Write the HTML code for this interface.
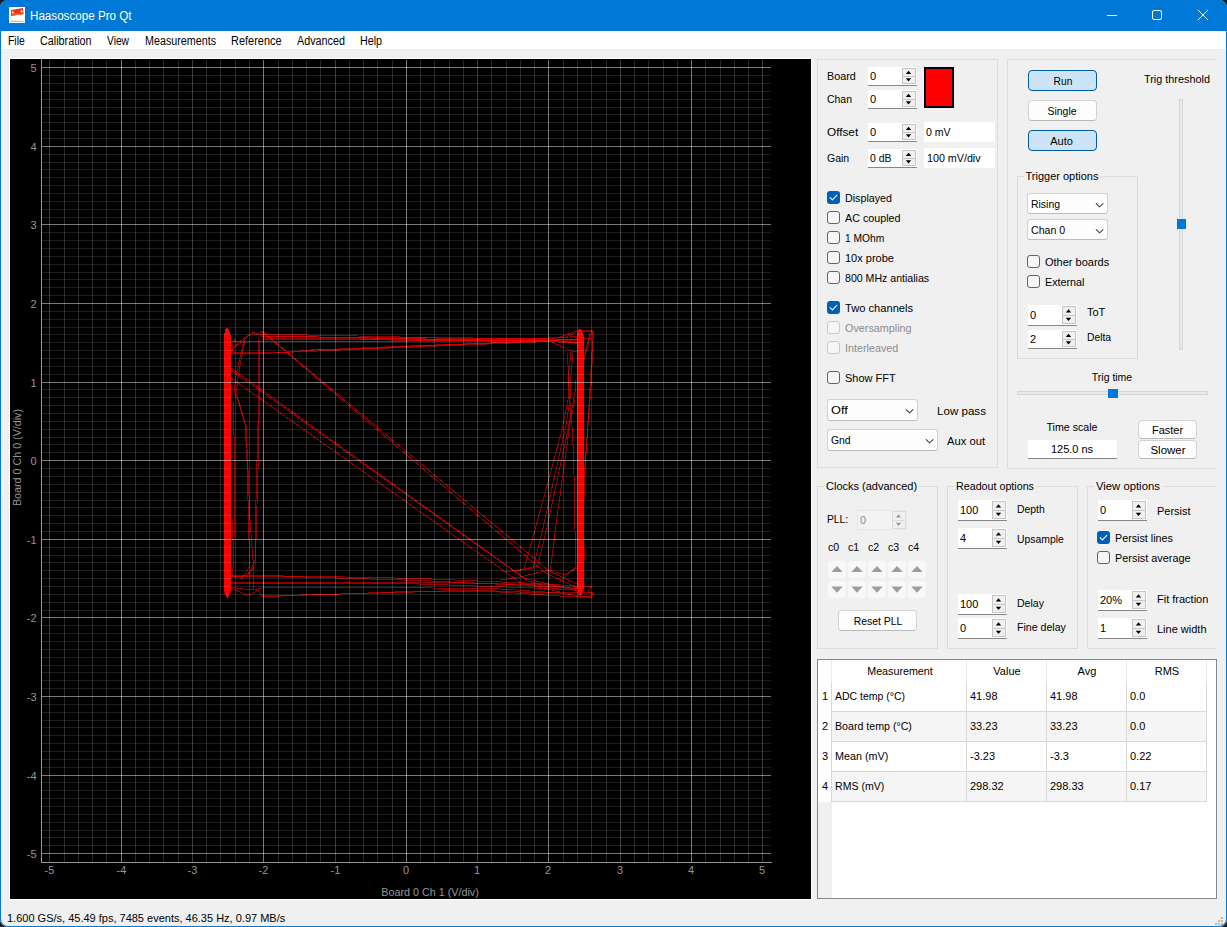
<!DOCTYPE html>
<html><head><meta charset="utf-8"><title>Haasoscope Pro Qt</title>
<style>
html,body{margin:0;padding:0;}
body{width:1227px;height:927px;overflow:hidden;background:#1b1b1b;font-family:"Liberation Sans", sans-serif;}
#win{position:absolute;left:0;top:0;width:1227px;height:927px;background:#f0f0f0;
 box-shadow:inset 0 0 0 1px #0078d7;border-radius:8px;overflow:hidden;}
#win div,#win svg{position:absolute;}
.t{font-family:"Liberation Sans", sans-serif;}
</style></head><body>
<div id="win">
<div style="left:0px;top:0px;width:1227px;height:31px;background:#0078d7;"></div>
<svg style="left:9px;top:7px" width="16" height="16"><rect width="16" height="16" fill="#fff"/><path d="M1.8 3.1 L14.1 0.9 L14.6 7.2 L2.2 9.1 Z" fill="#ee3a0b"/><ellipse cx="3.8" cy="5.5" rx="1" ry="1.3" fill="#e8f4f4"/><ellipse cx="12.6" cy="4.5" rx="1" ry="1.3" fill="#e8f4f4"/><path d="M5.5 7.3 H10.5" stroke="#f59a80" stroke-width="0.8"/><rect x="0.5" y="13.6" width="15" height="1.4" fill="#d9d3cf"/><rect x="1.5" y="14" width="11" height="0.8" fill="#b5b5b5"/></svg>
<div class="t" style="top:9px;font-size:12px;line-height:14px;color:#fff;white-space:nowrap;transform:scaleX(0.9693);transform-origin:left center;left:30px;">Haasoscope Pro Qt</div>
<svg style="left:1100px;top:5px" width="120" height="22"><path d="M7 10.5 H17" stroke="#fff" stroke-width="1" fill="none"/><rect x="52.5" y="5.5" width="9" height="9" rx="1.5" fill="none" stroke="#fff" stroke-width="1"/><path d="M98 5 L108 15 M108 5 L98 15" stroke="#fff" stroke-width="1" fill="none"/></svg>
<div style="left:1px;top:31px;width:1225px;height:18px;background:#fff;"></div>
<div class="t" style="top:34px;font-size:12px;line-height:14px;color:#000;white-space:nowrap;transform:scaleX(0.8685);transform-origin:left center;left:8px;">File</div>
<div class="t" style="top:34px;font-size:12px;line-height:14px;color:#000;white-space:nowrap;transform:scaleX(0.8993);transform-origin:left center;left:40px;">Calibration</div>
<div class="t" style="top:34px;font-size:12px;line-height:14px;color:#000;white-space:nowrap;transform:scaleX(0.8528);transform-origin:left center;left:107px;">View</div>
<div class="t" style="top:34px;font-size:12px;line-height:14px;color:#000;white-space:nowrap;transform:scaleX(0.8945);transform-origin:left center;left:144.5px;">Measurements</div>
<div class="t" style="top:34px;font-size:12px;line-height:14px;color:#000;white-space:nowrap;transform:scaleX(0.9138);transform-origin:left center;left:230.5px;">Reference</div>
<div class="t" style="top:34px;font-size:12px;line-height:14px;color:#000;white-space:nowrap;transform:scaleX(0.8993);transform-origin:left center;left:297px;">Advanced</div>
<div class="t" style="top:34px;font-size:12px;line-height:14px;color:#000;white-space:nowrap;transform:scaleX(0.8911);transform-origin:left center;left:360px;">Help</div>
<div style="left:9px;top:58px;width:803px;height:842px;background:#000;border:1px solid #fff;box-sizing:border-box;"></div>
<svg style="left:0;top:0" width="830" height="905" shape-rendering="crispEdges">
<path d="M224 336 L225 330 L227 327 L229 330 L231 336 L231 590 L228 597 L227 598 L224 590 Z" fill="#ff0000"/>
<path d="M577 336 L578 331 L580 328 L582 331 L584 338 L584 588 L581 595 L580 596 L577 588 Z" fill="#ff0000"/>
<polyline points="227.2,334.8 227.8,455.9 227.2,589.8" fill="none" stroke="#ff0000" stroke-opacity="0.5" stroke-width="1"/>
<polyline points="578.6,335.2 578.8,495.2 578.0,591.8" fill="none" stroke="#ff0000" stroke-opacity="0.5" stroke-width="1"/>
<polyline points="225.0,338.3 225.3,405.0 225.7,584.5" fill="none" stroke="#ff0000" stroke-opacity="0.5" stroke-width="1"/>
<polyline points="581.4,336.6 580.9,401.8 581.5,595.2" fill="none" stroke="#ff0000" stroke-opacity="0.5" stroke-width="1"/>
<polyline points="225.6,330.4 225.0,455.7 225.6,586.2" fill="none" stroke="#ff0000" stroke-opacity="0.5" stroke-width="1"/>
<polyline points="580.6,337.0 580.6,479.5 580.6,592.1" fill="none" stroke="#ff0000" stroke-opacity="0.5" stroke-width="1"/>
<polyline points="230.5,340.9 231.0,484.9 230.2,594.8" fill="none" stroke="#ff0000" stroke-opacity="0.5" stroke-width="1"/>
<polyline points="579.2,329.0 579.6,448.0 579.7,590.6" fill="none" stroke="#ff0000" stroke-opacity="0.5" stroke-width="1"/>
<polyline points="230.2,338.9 229.5,425.2 230.8,591.4" fill="none" stroke="#ff0000" stroke-opacity="0.5" stroke-width="1"/>
<polyline points="583.4,333.6 582.8,475.5 583.8,592.2" fill="none" stroke="#ff0000" stroke-opacity="0.5" stroke-width="1"/>
<polyline points="225.0,331.7 225.7,491.0 224.5,594.6" fill="none" stroke="#ff0000" stroke-opacity="0.5" stroke-width="1"/>
<polyline points="578.1,328.8 578.5,421.3 578.2,589.7" fill="none" stroke="#ff0000" stroke-opacity="0.5" stroke-width="1"/>
<polyline points="225.6,337.2 225.1,477.2 225.1,592.1" fill="none" stroke="#ff0000" stroke-opacity="0.5" stroke-width="1"/>
<polyline points="578.8,331.8 579.4,496.4 578.5,583.6" fill="none" stroke="#ff0000" stroke-opacity="0.5" stroke-width="1"/>
<polyline points="225.8,332.5 226.3,477.0 225.2,584.1" fill="none" stroke="#ff0000" stroke-opacity="0.5" stroke-width="1"/>
<polyline points="578.8,331.6 579.2,439.5 578.5,595.0" fill="none" stroke="#ff0000" stroke-opacity="0.5" stroke-width="1"/>
<polyline points="225.0,335.2 224.7,472.2 224.9,591.7" fill="none" stroke="#ff0000" stroke-opacity="0.5" stroke-width="1"/>
<polyline points="583.3,334.8 583.4,504.0 582.8,593.8" fill="none" stroke="#ff0000" stroke-opacity="0.5" stroke-width="1"/>
<polyline points="230.0,338.4 229.6,422.8 230.3,584.8" fill="none" stroke="#ff0000" stroke-opacity="0.5" stroke-width="1"/>
<polyline points="578.7,341.3 579.2,472.4 578.6,594.5" fill="none" stroke="#ff0000" stroke-opacity="0.5" stroke-width="1"/>
<polyline points="261.0,336.5 548.0,339.0 577.0,336.2" fill="none" stroke="#ff0000" stroke-opacity="0.56" stroke-width="1"/>
<polyline points="263.0,338.0 548.0,339.8 577.0,342.6" fill="none" stroke="#ff0000" stroke-opacity="0.56" stroke-width="1"/>
<polyline points="262.0,339.5 548.0,340.6 577.0,339.0" fill="none" stroke="#ff0000" stroke-opacity="0.56" stroke-width="1"/>
<polyline points="262.0,336.0 548.0,341.2 577.0,342.4" fill="none" stroke="#ff0000" stroke-opacity="0.56" stroke-width="1"/>
<polyline points="360.0,339.5 548.0,340.4 577.0,338.9" fill="none" stroke="#ff0000" stroke-opacity="0.56" stroke-width="1"/>
<polyline points="231.0,341.5 548.0,341.3 577.0,343.2" fill="none" stroke="#ff0000" stroke-opacity="0.56" stroke-width="1"/>
<polyline points="231.0,342.0 548.0,340.2 577.0,340.8" fill="none" stroke="#ff0000" stroke-opacity="0.56" stroke-width="1"/>
<polyline points="258.0,334.5 277.0,334.5 337.0,335.5 400.0,337.0 548.0,339.0" fill="none" stroke="#ff0000" stroke-opacity="0.56" stroke-width="1"/>
<polyline points="231.0,352.7 282.0,352.5 330.0,350.5 420.0,346.0 548.0,340.5" fill="none" stroke="#ff0000" stroke-opacity="0.56" stroke-width="1"/>
<polyline points="231.0,353.2 275.0,353.0 310.0,350.2 430.0,345.2 548.0,341.0" fill="none" stroke="#ff0000" stroke-opacity="0.56" stroke-width="1"/>
<polyline points="310.0,350.0 380.0,348.4 548.0,341.5" fill="none" stroke="#ff0000" stroke-opacity="0.56" stroke-width="1"/>
<polyline points="548.0,340.0 573.0,352.0 577.0,351.0" fill="none" stroke="#ff0000" stroke-opacity="0.56" stroke-width="1"/>
<polyline points="548.0,338.0 566.0,337.0 575.0,333.0 580.0,329.0" fill="none" stroke="#ff0000" stroke-opacity="0.56" stroke-width="1"/>
<polyline points="548.0,339.0 570.0,340.0 592.0,338.0" fill="none" stroke="#ff0000" stroke-opacity="0.56" stroke-width="1"/>
<polyline points="560.0,337.0 577.0,331.0 592.0,330.0 593.0,345.0 590.8,390.0 584.0,478.0" fill="none" stroke="#ff0000" stroke-opacity="0.56" stroke-width="1"/>
<polyline points="577.0,333.0 590.0,331.0 594.0,331.0 592.0,352.0 589.0,405.0 585.0,470.0 584.5,500.0" fill="none" stroke="#ff0000" stroke-opacity="0.56" stroke-width="1"/>
<polyline points="584.6,548.0 584.8,560.0" fill="none" stroke="#ff0000" stroke-opacity="0.56" stroke-width="1"/>
<polyline points="592.0,330.0 584.0,360.0 583.0,372.0" fill="none" stroke="#ff0000" stroke-opacity="0.56" stroke-width="1"/>
<polyline points="590.0,333.0 583.0,362.0" fill="none" stroke="#ff0000" stroke-opacity="0.56" stroke-width="1"/>
<polyline points="230.0,353.0 236.0,346.0 242.0,342.0 248.0,336.0 253.0,333.0 256.0,335.0 262.0,331.0" fill="none" stroke="#ff0000" stroke-opacity="0.56" stroke-width="1"/>
<polyline points="231.0,350.0 238.0,343.0 246.0,337.0 254.0,332.0 258.0,334.0" fill="none" stroke="#ff0000" stroke-opacity="0.56" stroke-width="1"/>
<polyline points="232.0,342.0 236.0,339.0 231.0,346.0" fill="none" stroke="#ff0000" stroke-opacity="0.56" stroke-width="1"/>
<polyline points="231.0,345.0 234.0,348.0 231.0,352.0" fill="none" stroke="#ff0000" stroke-opacity="0.56" stroke-width="1"/>
<polyline points="244.0,340.0 240.0,358.0 236.0,376.0 234.0,392.0 238.0,400.0 245.0,424.0 247.0,460.0 248.0,500.0 249.0,540.0 250.0,566.0 243.0,577.0 232.0,576.0" fill="none" stroke="#ff0000" stroke-opacity="0.56" stroke-width="1"/>
<polyline points="245.0,340.0 241.0,360.0 238.0,378.0 236.0,394.0 239.0,402.0 246.0,426.0 248.0,470.0 250.0,520.0 253.0,560.0 253.0,590.0" fill="none" stroke="#ff0000" stroke-opacity="0.56" stroke-width="1"/>
<polyline points="258.0,338.0 258.0,425.0 257.0,460.0 256.0,500.0 255.0,560.0 250.0,572.0 240.0,579.0" fill="none" stroke="#ff0000" stroke-opacity="0.56" stroke-width="1"/>
<polyline points="259.0,340.0 259.0,420.0 258.0,470.0 256.0,540.0 255.0,566.0 246.0,578.0" fill="none" stroke="#ff0000" stroke-opacity="0.56" stroke-width="1"/>
<polyline points="232.0,520.0 234.0,560.0 232.0,576.0" fill="none" stroke="#ff0000" stroke-opacity="0.56" stroke-width="1"/>
<polyline points="233.0,400.0 235.0,470.0 234.0,540.0" fill="none" stroke="#ff0000" stroke-opacity="0.56" stroke-width="1"/>
<polyline points="262.0,331.0 500.0,529.8 549.0,571.0 577.0,584.0" fill="none" stroke="#ff0000" stroke-opacity="0.56" stroke-width="1"/>
<polyline points="262.0,331.5 500.0,534.2 545.0,572.5 577.0,588.0" fill="none" stroke="#ff0000" stroke-opacity="0.56" stroke-width="1"/>
<polyline points="231.0,367.8 524.0,578.0 577.0,591.0" fill="none" stroke="#ff0000" stroke-opacity="0.56" stroke-width="1"/>
<polyline points="231.0,370.0 528.0,581.0 560.0,590.0" fill="none" stroke="#ff0000" stroke-opacity="0.56" stroke-width="1"/>
<polyline points="231.0,378.0 521.0,583.0 560.0,592.0" fill="none" stroke="#ff0000" stroke-opacity="0.56" stroke-width="1"/>
<polyline points="506.0,572.0 524.0,569.0 535.0,530.0 562.0,430.0 568.0,400.0 569.0,370.0 571.0,352.0" fill="none" stroke="#ff0000" stroke-opacity="0.56" stroke-width="1"/>
<polyline points="515.0,571.0 533.0,568.0 542.5,530.0 566.0,425.0 570.0,400.0 571.0,375.0 573.0,353.0" fill="none" stroke="#ff0000" stroke-opacity="0.56" stroke-width="1"/>
<polyline points="520.0,570.0 537.6,566.0 546.3,530.0 568.0,430.0 575.0,392.0 576.0,380.0" fill="none" stroke="#ff0000" stroke-opacity="0.56" stroke-width="1"/>
<polyline points="549.4,578.7 555.3,530.0 570.4,420.0 575.0,400.0" fill="none" stroke="#ff0000" stroke-opacity="0.56" stroke-width="1"/>
<polyline points="567.5,353.0 569.0,390.0 572.7,435.0 574.0,475.0 575.0,530.0 576.0,566.0" fill="none" stroke="#ff0000" stroke-opacity="0.56" stroke-width="1"/>
<polyline points="231.0,575.7 300.0,576.1 420.0,578.5 548.0,584.0 577.0,586.2" fill="none" stroke="#ff0000" stroke-opacity="0.56" stroke-width="1"/>
<polyline points="231.0,576.5 300.0,576.9 420.0,580.5 548.0,586.5 577.0,588.2" fill="none" stroke="#ff0000" stroke-opacity="0.56" stroke-width="1"/>
<polyline points="231.0,582.6 300.0,583.0 420.0,582.0 548.0,585.0 577.0,588.9" fill="none" stroke="#ff0000" stroke-opacity="0.56" stroke-width="1"/>
<polyline points="231.0,583.0 300.0,583.4 420.0,584.0 548.0,588.5 577.0,589.8" fill="none" stroke="#ff0000" stroke-opacity="0.56" stroke-width="1"/>
<polyline points="231.0,587.5 255.0,590.0 262.0,588.0 400.0,587.5 500.0,589.0 560.0,593.0 592.0,598.0" fill="none" stroke="#ff0000" stroke-opacity="0.56" stroke-width="1"/>
<polyline points="231.0,588.0 244.0,594.0 252.0,594.0 258.0,590.0 262.0,596.0 330.0,594.5 420.0,591.0 500.0,592.0 560.0,596.0 594.0,596.0" fill="none" stroke="#ff0000" stroke-opacity="0.56" stroke-width="1"/>
<polyline points="262.0,597.0 300.0,595.0 400.0,592.5 470.0,590.0 520.0,592.0 594.0,592.0" fill="none" stroke="#ff0000" stroke-opacity="0.56" stroke-width="1"/>
<polyline points="500.0,580.0 520.0,577.0 549.0,570.0 565.0,575.0 577.0,568.0" fill="none" stroke="#ff0000" stroke-opacity="0.56" stroke-width="1"/>
<polyline points="560.0,582.0 570.0,572.0 577.0,566.0" fill="none" stroke="#ff0000" stroke-opacity="0.56" stroke-width="1"/>
<polyline points="584.0,587.0 592.0,586.0 588.0,592.0 594.0,594.0 586.0,597.0" fill="none" stroke="#ff0000" stroke-opacity="0.56" stroke-width="1"/>
<rect x="42" y="845" width="729" height="1" fill="#fff" fill-opacity="0.118"/>
<rect x="42" y="837" width="729" height="1" fill="#fff" fill-opacity="0.118"/>
<rect x="42" y="830" width="729" height="1" fill="#fff" fill-opacity="0.118"/>
<rect x="42" y="822" width="729" height="1" fill="#fff" fill-opacity="0.118"/>
<rect x="42" y="814" width="729" height="1" fill="#fff" fill-opacity="0.118"/>
<rect x="42" y="806" width="729" height="1" fill="#fff" fill-opacity="0.118"/>
<rect x="42" y="798" width="729" height="1" fill="#fff" fill-opacity="0.118"/>
<rect x="42" y="790" width="729" height="1" fill="#fff" fill-opacity="0.118"/>
<rect x="42" y="782" width="729" height="1" fill="#fff" fill-opacity="0.118"/>
<rect x="42" y="767" width="729" height="1" fill="#fff" fill-opacity="0.118"/>
<rect x="42" y="759" width="729" height="1" fill="#fff" fill-opacity="0.118"/>
<rect x="42" y="751" width="729" height="1" fill="#fff" fill-opacity="0.118"/>
<rect x="42" y="743" width="729" height="1" fill="#fff" fill-opacity="0.118"/>
<rect x="42" y="735" width="729" height="1" fill="#fff" fill-opacity="0.118"/>
<rect x="42" y="727" width="729" height="1" fill="#fff" fill-opacity="0.118"/>
<rect x="42" y="720" width="729" height="1" fill="#fff" fill-opacity="0.118"/>
<rect x="42" y="712" width="729" height="1" fill="#fff" fill-opacity="0.118"/>
<rect x="42" y="704" width="729" height="1" fill="#fff" fill-opacity="0.118"/>
<rect x="42" y="688" width="729" height="1" fill="#fff" fill-opacity="0.118"/>
<rect x="42" y="680" width="729" height="1" fill="#fff" fill-opacity="0.118"/>
<rect x="42" y="672" width="729" height="1" fill="#fff" fill-opacity="0.118"/>
<rect x="42" y="665" width="729" height="1" fill="#fff" fill-opacity="0.118"/>
<rect x="42" y="657" width="729" height="1" fill="#fff" fill-opacity="0.118"/>
<rect x="42" y="649" width="729" height="1" fill="#fff" fill-opacity="0.118"/>
<rect x="42" y="641" width="729" height="1" fill="#fff" fill-opacity="0.118"/>
<rect x="42" y="633" width="729" height="1" fill="#fff" fill-opacity="0.118"/>
<rect x="42" y="625" width="729" height="1" fill="#fff" fill-opacity="0.118"/>
<rect x="42" y="610" width="729" height="1" fill="#fff" fill-opacity="0.118"/>
<rect x="42" y="602" width="729" height="1" fill="#fff" fill-opacity="0.118"/>
<rect x="42" y="594" width="729" height="1" fill="#fff" fill-opacity="0.118"/>
<rect x="42" y="586" width="729" height="1" fill="#fff" fill-opacity="0.118"/>
<rect x="42" y="578" width="729" height="1" fill="#fff" fill-opacity="0.118"/>
<rect x="42" y="570" width="729" height="1" fill="#fff" fill-opacity="0.118"/>
<rect x="42" y="562" width="729" height="1" fill="#fff" fill-opacity="0.118"/>
<rect x="42" y="555" width="729" height="1" fill="#fff" fill-opacity="0.118"/>
<rect x="42" y="547" width="729" height="1" fill="#fff" fill-opacity="0.118"/>
<rect x="42" y="531" width="729" height="1" fill="#fff" fill-opacity="0.118"/>
<rect x="42" y="523" width="729" height="1" fill="#fff" fill-opacity="0.118"/>
<rect x="42" y="515" width="729" height="1" fill="#fff" fill-opacity="0.118"/>
<rect x="42" y="507" width="729" height="1" fill="#fff" fill-opacity="0.118"/>
<rect x="42" y="500" width="729" height="1" fill="#fff" fill-opacity="0.118"/>
<rect x="42" y="492" width="729" height="1" fill="#fff" fill-opacity="0.118"/>
<rect x="42" y="484" width="729" height="1" fill="#fff" fill-opacity="0.118"/>
<rect x="42" y="476" width="729" height="1" fill="#fff" fill-opacity="0.118"/>
<rect x="42" y="468" width="729" height="1" fill="#fff" fill-opacity="0.118"/>
<rect x="42" y="452" width="729" height="1" fill="#fff" fill-opacity="0.118"/>
<rect x="42" y="444" width="729" height="1" fill="#fff" fill-opacity="0.118"/>
<rect x="42" y="437" width="729" height="1" fill="#fff" fill-opacity="0.118"/>
<rect x="42" y="429" width="729" height="1" fill="#fff" fill-opacity="0.118"/>
<rect x="42" y="421" width="729" height="1" fill="#fff" fill-opacity="0.118"/>
<rect x="42" y="413" width="729" height="1" fill="#fff" fill-opacity="0.118"/>
<rect x="42" y="405" width="729" height="1" fill="#fff" fill-opacity="0.118"/>
<rect x="42" y="397" width="729" height="1" fill="#fff" fill-opacity="0.118"/>
<rect x="42" y="389" width="729" height="1" fill="#fff" fill-opacity="0.118"/>
<rect x="42" y="374" width="729" height="1" fill="#fff" fill-opacity="0.118"/>
<rect x="42" y="366" width="729" height="1" fill="#fff" fill-opacity="0.118"/>
<rect x="42" y="358" width="729" height="1" fill="#fff" fill-opacity="0.118"/>
<rect x="42" y="350" width="729" height="1" fill="#fff" fill-opacity="0.118"/>
<rect x="42" y="342" width="729" height="1" fill="#fff" fill-opacity="0.118"/>
<rect x="42" y="334" width="729" height="1" fill="#fff" fill-opacity="0.118"/>
<rect x="42" y="327" width="729" height="1" fill="#fff" fill-opacity="0.118"/>
<rect x="42" y="319" width="729" height="1" fill="#fff" fill-opacity="0.118"/>
<rect x="42" y="311" width="729" height="1" fill="#fff" fill-opacity="0.118"/>
<rect x="42" y="295" width="729" height="1" fill="#fff" fill-opacity="0.118"/>
<rect x="42" y="287" width="729" height="1" fill="#fff" fill-opacity="0.118"/>
<rect x="42" y="279" width="729" height="1" fill="#fff" fill-opacity="0.118"/>
<rect x="42" y="272" width="729" height="1" fill="#fff" fill-opacity="0.118"/>
<rect x="42" y="264" width="729" height="1" fill="#fff" fill-opacity="0.118"/>
<rect x="42" y="256" width="729" height="1" fill="#fff" fill-opacity="0.118"/>
<rect x="42" y="248" width="729" height="1" fill="#fff" fill-opacity="0.118"/>
<rect x="42" y="240" width="729" height="1" fill="#fff" fill-opacity="0.118"/>
<rect x="42" y="232" width="729" height="1" fill="#fff" fill-opacity="0.118"/>
<rect x="42" y="217" width="729" height="1" fill="#fff" fill-opacity="0.118"/>
<rect x="42" y="209" width="729" height="1" fill="#fff" fill-opacity="0.118"/>
<rect x="42" y="201" width="729" height="1" fill="#fff" fill-opacity="0.118"/>
<rect x="42" y="193" width="729" height="1" fill="#fff" fill-opacity="0.118"/>
<rect x="42" y="185" width="729" height="1" fill="#fff" fill-opacity="0.118"/>
<rect x="42" y="177" width="729" height="1" fill="#fff" fill-opacity="0.118"/>
<rect x="42" y="169" width="729" height="1" fill="#fff" fill-opacity="0.118"/>
<rect x="42" y="162" width="729" height="1" fill="#fff" fill-opacity="0.118"/>
<rect x="42" y="154" width="729" height="1" fill="#fff" fill-opacity="0.118"/>
<rect x="42" y="138" width="729" height="1" fill="#fff" fill-opacity="0.118"/>
<rect x="42" y="130" width="729" height="1" fill="#fff" fill-opacity="0.118"/>
<rect x="42" y="122" width="729" height="1" fill="#fff" fill-opacity="0.118"/>
<rect x="42" y="114" width="729" height="1" fill="#fff" fill-opacity="0.118"/>
<rect x="42" y="107" width="729" height="1" fill="#fff" fill-opacity="0.118"/>
<rect x="42" y="99" width="729" height="1" fill="#fff" fill-opacity="0.118"/>
<rect x="42" y="91" width="729" height="1" fill="#fff" fill-opacity="0.118"/>
<rect x="42" y="83" width="729" height="1" fill="#fff" fill-opacity="0.118"/>
<rect x="42" y="75" width="729" height="1" fill="#fff" fill-opacity="0.118"/>
<rect x="64" y="60" width="1" height="802" fill="#fff" fill-opacity="0.16"/>
<rect x="78" y="60" width="1" height="802" fill="#fff" fill-opacity="0.16"/>
<rect x="92" y="60" width="1" height="802" fill="#fff" fill-opacity="0.16"/>
<rect x="106" y="60" width="1" height="802" fill="#fff" fill-opacity="0.16"/>
<rect x="135" y="60" width="1" height="802" fill="#fff" fill-opacity="0.16"/>
<rect x="149" y="60" width="1" height="802" fill="#fff" fill-opacity="0.16"/>
<rect x="163" y="60" width="1" height="802" fill="#fff" fill-opacity="0.16"/>
<rect x="178" y="60" width="1" height="802" fill="#fff" fill-opacity="0.16"/>
<rect x="206" y="60" width="1" height="802" fill="#fff" fill-opacity="0.16"/>
<rect x="220" y="60" width="1" height="802" fill="#fff" fill-opacity="0.16"/>
<rect x="235" y="60" width="1" height="802" fill="#fff" fill-opacity="0.16"/>
<rect x="249" y="60" width="1" height="802" fill="#fff" fill-opacity="0.16"/>
<rect x="278" y="60" width="1" height="802" fill="#fff" fill-opacity="0.16"/>
<rect x="292" y="60" width="1" height="802" fill="#fff" fill-opacity="0.16"/>
<rect x="306" y="60" width="1" height="802" fill="#fff" fill-opacity="0.16"/>
<rect x="320" y="60" width="1" height="802" fill="#fff" fill-opacity="0.16"/>
<rect x="349" y="60" width="1" height="802" fill="#fff" fill-opacity="0.16"/>
<rect x="363" y="60" width="1" height="802" fill="#fff" fill-opacity="0.16"/>
<rect x="377" y="60" width="1" height="802" fill="#fff" fill-opacity="0.16"/>
<rect x="392" y="60" width="1" height="802" fill="#fff" fill-opacity="0.16"/>
<rect x="420" y="60" width="1" height="802" fill="#fff" fill-opacity="0.16"/>
<rect x="434" y="60" width="1" height="802" fill="#fff" fill-opacity="0.16"/>
<rect x="449" y="60" width="1" height="802" fill="#fff" fill-opacity="0.16"/>
<rect x="463" y="60" width="1" height="802" fill="#fff" fill-opacity="0.16"/>
<rect x="491" y="60" width="1" height="802" fill="#fff" fill-opacity="0.16"/>
<rect x="506" y="60" width="1" height="802" fill="#fff" fill-opacity="0.16"/>
<rect x="520" y="60" width="1" height="802" fill="#fff" fill-opacity="0.16"/>
<rect x="534" y="60" width="1" height="802" fill="#fff" fill-opacity="0.16"/>
<rect x="563" y="60" width="1" height="802" fill="#fff" fill-opacity="0.16"/>
<rect x="577" y="60" width="1" height="802" fill="#fff" fill-opacity="0.16"/>
<rect x="591" y="60" width="1" height="802" fill="#fff" fill-opacity="0.16"/>
<rect x="606" y="60" width="1" height="802" fill="#fff" fill-opacity="0.16"/>
<rect x="634" y="60" width="1" height="802" fill="#fff" fill-opacity="0.16"/>
<rect x="648" y="60" width="1" height="802" fill="#fff" fill-opacity="0.16"/>
<rect x="663" y="60" width="1" height="802" fill="#fff" fill-opacity="0.16"/>
<rect x="677" y="60" width="1" height="802" fill="#fff" fill-opacity="0.16"/>
<rect x="705" y="60" width="1" height="802" fill="#fff" fill-opacity="0.16"/>
<rect x="720" y="60" width="1" height="802" fill="#fff" fill-opacity="0.16"/>
<rect x="734" y="60" width="1" height="802" fill="#fff" fill-opacity="0.16"/>
<rect x="748" y="60" width="1" height="802" fill="#fff" fill-opacity="0.16"/>
<rect x="42" y="853" width="729" height="1" fill="#fff" fill-opacity="0.47"/>
<rect x="42" y="775" width="729" height="1" fill="#fff" fill-opacity="0.47"/>
<rect x="42" y="696" width="729" height="1" fill="#fff" fill-opacity="0.47"/>
<rect x="42" y="617" width="729" height="1" fill="#fff" fill-opacity="0.47"/>
<rect x="42" y="539" width="729" height="1" fill="#fff" fill-opacity="0.47"/>
<rect x="42" y="460" width="729" height="1" fill="#fff" fill-opacity="0.47"/>
<rect x="42" y="382" width="729" height="1" fill="#fff" fill-opacity="0.47"/>
<rect x="42" y="303" width="729" height="1" fill="#fff" fill-opacity="0.47"/>
<rect x="42" y="224" width="729" height="1" fill="#fff" fill-opacity="0.47"/>
<rect x="42" y="146" width="729" height="1" fill="#fff" fill-opacity="0.47"/>
<rect x="42" y="67" width="729" height="1" fill="#fff" fill-opacity="0.47"/>
<rect x="49" y="60" width="1" height="802" fill="#fff" fill-opacity="0.235"/>
<rect x="121" y="60" width="1" height="802" fill="#fff" fill-opacity="0.47"/>
<rect x="192" y="60" width="1" height="802" fill="#fff" fill-opacity="0.235"/>
<rect x="263" y="60" width="1" height="802" fill="#fff" fill-opacity="0.47"/>
<rect x="335" y="60" width="1" height="802" fill="#fff" fill-opacity="0.235"/>
<rect x="406" y="60" width="1" height="802" fill="#fff" fill-opacity="0.47"/>
<rect x="477" y="60" width="1" height="802" fill="#fff" fill-opacity="0.235"/>
<rect x="548" y="60" width="1" height="802" fill="#fff" fill-opacity="0.47"/>
<rect x="620" y="60" width="1" height="802" fill="#fff" fill-opacity="0.235"/>
<rect x="691" y="60" width="1" height="802" fill="#fff" fill-opacity="0.47"/>
<rect x="762" y="60" width="1" height="802" fill="#fff" fill-opacity="0.235"/>
<rect x="41" y="59" width="1" height="804" fill="#969696"/>
<rect x="41" y="862" width="731" height="1" fill="#969696"/>
</svg>
<div class="t" style="top:848px;font-size:11px;line-height:13px;color:#969696;white-space:nowrap;left:-263.5px;width:300px;text-align:right;">-5</div>
<div class="t" style="top:864px;font-size:11px;line-height:13px;color:#969696;white-space:nowrap;left:-100.5px;width:300px;text-align:center;">-5</div>
<div class="t" style="top:770px;font-size:11px;line-height:13px;color:#969696;white-space:nowrap;left:-263.5px;width:300px;text-align:right;">-4</div>
<div class="t" style="top:864px;font-size:11px;line-height:13px;color:#969696;white-space:nowrap;left:-28.5px;width:300px;text-align:center;">-4</div>
<div class="t" style="top:691px;font-size:11px;line-height:13px;color:#969696;white-space:nowrap;left:-263.5px;width:300px;text-align:right;">-3</div>
<div class="t" style="top:864px;font-size:11px;line-height:13px;color:#969696;white-space:nowrap;left:42.5px;width:300px;text-align:center;">-3</div>
<div class="t" style="top:612px;font-size:11px;line-height:13px;color:#969696;white-space:nowrap;left:-263.5px;width:300px;text-align:right;">-2</div>
<div class="t" style="top:864px;font-size:11px;line-height:13px;color:#969696;white-space:nowrap;left:113.5px;width:300px;text-align:center;">-2</div>
<div class="t" style="top:534px;font-size:11px;line-height:13px;color:#969696;white-space:nowrap;left:-263.5px;width:300px;text-align:right;">-1</div>
<div class="t" style="top:864px;font-size:11px;line-height:13px;color:#969696;white-space:nowrap;left:185.5px;width:300px;text-align:center;">-1</div>
<div class="t" style="top:455px;font-size:11px;line-height:13px;color:#969696;white-space:nowrap;left:-263.5px;width:300px;text-align:right;">0</div>
<div class="t" style="top:864px;font-size:11px;line-height:13px;color:#969696;white-space:nowrap;left:256px;width:300px;text-align:center;">0</div>
<div class="t" style="top:377px;font-size:11px;line-height:13px;color:#969696;white-space:nowrap;left:-263.5px;width:300px;text-align:right;">1</div>
<div class="t" style="top:864px;font-size:11px;line-height:13px;color:#969696;white-space:nowrap;left:327px;width:300px;text-align:center;">1</div>
<div class="t" style="top:298px;font-size:11px;line-height:13px;color:#969696;white-space:nowrap;left:-263.5px;width:300px;text-align:right;">2</div>
<div class="t" style="top:864px;font-size:11px;line-height:13px;color:#969696;white-space:nowrap;left:398px;width:300px;text-align:center;">2</div>
<div class="t" style="top:219px;font-size:11px;line-height:13px;color:#969696;white-space:nowrap;left:-263.5px;width:300px;text-align:right;">3</div>
<div class="t" style="top:864px;font-size:11px;line-height:13px;color:#969696;white-space:nowrap;left:470px;width:300px;text-align:center;">3</div>
<div class="t" style="top:141px;font-size:11px;line-height:13px;color:#969696;white-space:nowrap;left:-263.5px;width:300px;text-align:right;">4</div>
<div class="t" style="top:864px;font-size:11px;line-height:13px;color:#969696;white-space:nowrap;left:541px;width:300px;text-align:center;">4</div>
<div class="t" style="top:62px;font-size:11px;line-height:13px;color:#969696;white-space:nowrap;left:-263.5px;width:300px;text-align:right;">5</div>
<div class="t" style="top:864px;font-size:11px;line-height:13px;color:#969696;white-space:nowrap;left:612px;width:300px;text-align:center;">5</div>
<div class="t" style="top:886px;font-size:11px;line-height:13px;color:#969696;white-space:nowrap;transform:scaleX(0.979);transform-origin:center center;left:280px;width:300px;text-align:center;">Board 0 Ch 1 (V/div)</div>
<div class="t" style="left:-133px;top:450.5px;width:300px;text-align:center;font-size:11px;line-height:13px;color:#969696;transform:rotate(-90deg) scaleX(0.974);white-space:nowrap;">Board 0 Ch 0 (V/div)</div>
<div class="t" style="top:912px;font-size:11px;line-height:13px;color:#000;white-space:nowrap;left:7px;">1.600 GS/s, 45.49 fps, 7485 events, 46.35 Hz, 0.97 MB/s</div>
<div style="left:1221px;top:917px;width:2px;height:2px;background:#b8b8b8;"></div>
<div style="left:1218px;top:920px;width:2px;height:2px;background:#b8b8b8;"></div>
<div style="left:1221px;top:920px;width:2px;height:2px;background:#b8b8b8;"></div>
<div style="left:1215px;top:923px;width:2px;height:2px;background:#b8b8b8;"></div>
<div style="left:1218px;top:923px;width:2px;height:2px;background:#b8b8b8;"></div>
<div style="left:1221px;top:923px;width:2px;height:2px;background:#b8b8b8;"></div>
<div style="left:817px;top:59px;width:181px;height:409px;border:1px solid #dcdcdc;box-sizing:border-box;"></div>
<div class="t" style="top:70px;font-size:11px;line-height:13px;color:#000;white-space:nowrap;transform:scaleX(0.98);transform-origin:left center;left:827px;">Board</div>
<div class="t" style="top:93px;font-size:11px;line-height:13px;color:#000;white-space:nowrap;transform:scaleX(0.948);transform-origin:left center;left:827px;">Chan</div>
<div style="left:868px;top:67px;width:49px;height:18px;background:#fff;"></div>
<div style="left:868px;top:85px;width:49px;height:1px;background:#868686;"></div>
<div style="left:902px;top:68px;width:14px;height:9px;border:1px solid #c6c6c6;background:#f0f0f0;box-sizing:border-box;"></div>
<div style="left:902px;top:76px;width:14px;height:8px;border:1px solid #c6c6c6;background:#f0f0f0;box-sizing:border-box;"></div>
<svg style="left:902px;top:67px" width="14" height="19"><path d="M3.8 7.1 L6.5 3.8 L9.2 7.1 Z" fill="#000"/><path d="M3.8 11.2 L6.5 14.5 L9.2 11.2 Z" fill="#000"/></svg>
<div class="t" style="top:70px;font-size:11px;line-height:13px;color:#000;white-space:nowrap;left:870px;">0</div>
<div style="left:868px;top:90px;width:49px;height:18px;background:#fff;"></div>
<div style="left:868px;top:108px;width:49px;height:1px;background:#868686;"></div>
<div style="left:902px;top:91px;width:14px;height:9px;border:1px solid #c6c6c6;background:#f0f0f0;box-sizing:border-box;"></div>
<div style="left:902px;top:99px;width:14px;height:8px;border:1px solid #c6c6c6;background:#f0f0f0;box-sizing:border-box;"></div>
<svg style="left:902px;top:90px" width="14" height="19"><path d="M3.8 7.1 L6.5 3.8 L9.2 7.1 Z" fill="#000"/><path d="M3.8 11.2 L6.5 14.5 L9.2 11.2 Z" fill="#000"/></svg>
<div class="t" style="top:93px;font-size:11px;line-height:13px;color:#000;white-space:nowrap;left:870px;">0</div>
<div style="left:924px;top:67px;width:30px;height:41px;background:#ff0000;border:2px solid #000;box-sizing:border-box;"></div>
<div class="t" style="top:126px;font-size:11px;line-height:13px;color:#000;white-space:nowrap;transform:scaleX(1.069);transform-origin:left center;left:827px;">Offset</div>
<div style="left:868px;top:123px;width:49px;height:18px;background:#fff;"></div>
<div style="left:868px;top:141px;width:49px;height:1px;background:#868686;"></div>
<div style="left:902px;top:124px;width:14px;height:9px;border:1px solid #c6c6c6;background:#f0f0f0;box-sizing:border-box;"></div>
<div style="left:902px;top:132px;width:14px;height:8px;border:1px solid #c6c6c6;background:#f0f0f0;box-sizing:border-box;"></div>
<svg style="left:902px;top:123px" width="14" height="19"><path d="M3.8 7.1 L6.5 3.8 L9.2 7.1 Z" fill="#000"/><path d="M3.8 11.2 L6.5 14.5 L9.2 11.2 Z" fill="#000"/></svg>
<div class="t" style="top:126px;font-size:11px;line-height:13px;color:#000;white-space:nowrap;left:870px;">0</div>
<div style="left:924px;top:122px;width:71px;height:20px;background:#fff;"></div>
<div class="t" style="top:126px;font-size:11px;line-height:13px;color:#000;white-space:nowrap;transform:scaleX(0.961);transform-origin:left center;left:926px;">0 mV</div>
<div class="t" style="top:152px;font-size:11px;line-height:13px;color:#000;white-space:nowrap;transform:scaleX(0.956);transform-origin:left center;left:827px;">Gain</div>
<div style="left:868px;top:149px;width:49px;height:18px;background:#fff;"></div>
<div style="left:868px;top:167px;width:49px;height:1px;background:#868686;"></div>
<div style="left:902px;top:150px;width:14px;height:9px;border:1px solid #c6c6c6;background:#f0f0f0;box-sizing:border-box;"></div>
<div style="left:902px;top:158px;width:14px;height:8px;border:1px solid #c6c6c6;background:#f0f0f0;box-sizing:border-box;"></div>
<svg style="left:902px;top:149px" width="14" height="19"><path d="M3.8 7.1 L6.5 3.8 L9.2 7.1 Z" fill="#000"/><path d="M3.8 11.2 L6.5 14.5 L9.2 11.2 Z" fill="#000"/></svg>
<div class="t" style="top:152px;font-size:11px;line-height:13px;color:#000;white-space:nowrap;transform:scaleX(0.948);transform-origin:left center;left:870px;">0 dB</div>
<div style="left:924px;top:148px;width:71px;height:20px;background:#fff;"></div>
<div class="t" style="top:152px;font-size:11px;line-height:13px;color:#000;white-space:nowrap;transform:scaleX(0.974);transform-origin:left center;left:926.5px;">100 mV/div</div>
<div style="left:827px;top:191px;width:13px;height:13px;background:#005fb8;border-radius:3px;"></div>
<svg style="left:827px;top:191px" width="13" height="13"><path d="M3.1 6.7 L5.4 8.9 L9.8 4.3" fill="none" stroke="#fff" stroke-width="1.1" stroke-linecap="round" stroke-linejoin="round"/></svg>
<div class="t" style="top:192px;font-size:11px;line-height:13px;color:#000;white-space:nowrap;transform:scaleX(0.973);transform-origin:left center;left:845px;">Displayed</div>
<div style="left:827px;top:211px;width:13px;height:13px;background:#f6f6f6;border:1px solid #626262;border-radius:3px;box-sizing:border-box;"></div>
<div class="t" style="top:212px;font-size:11px;line-height:13px;color:#000;white-space:nowrap;transform:scaleX(0.977);transform-origin:left center;left:845px;">AC coupled</div>
<div style="left:827px;top:231px;width:13px;height:13px;background:#f6f6f6;border:1px solid #626262;border-radius:3px;box-sizing:border-box;"></div>
<div class="t" style="top:232px;font-size:11px;line-height:13px;color:#000;white-space:nowrap;transform:scaleX(0.933);transform-origin:left center;left:845px;">1 MOhm</div>
<div style="left:827px;top:251px;width:13px;height:13px;background:#f6f6f6;border:1px solid #626262;border-radius:3px;box-sizing:border-box;"></div>
<div class="t" style="top:252px;font-size:11px;line-height:13px;color:#000;white-space:nowrap;left:845px;">10x probe</div>
<div style="left:827px;top:271px;width:13px;height:13px;background:#f6f6f6;border:1px solid #626262;border-radius:3px;box-sizing:border-box;"></div>
<div class="t" style="top:272px;font-size:11px;line-height:13px;color:#000;white-space:nowrap;transform:scaleX(0.962);transform-origin:left center;left:845px;">800 MHz antialias</div>
<div style="left:827px;top:301px;width:13px;height:13px;background:#005fb8;border-radius:3px;"></div>
<svg style="left:827px;top:301px" width="13" height="13"><path d="M3.1 6.7 L5.4 8.9 L9.8 4.3" fill="none" stroke="#fff" stroke-width="1.1" stroke-linecap="round" stroke-linejoin="round"/></svg>
<div class="t" style="top:302px;font-size:11px;line-height:13px;color:#000;white-space:nowrap;transform:scaleX(1.012);transform-origin:left center;left:845px;">Two channels</div>
<div style="left:827px;top:321px;width:13px;height:13px;background:#f6f6f6;border:1px solid #c9c9c9;border-radius:3px;box-sizing:border-box;"></div>
<div class="t" style="top:322px;font-size:11px;line-height:13px;color:#8c8c8c;white-space:nowrap;transform:scaleX(0.981);transform-origin:left center;left:845px;">Oversampling</div>
<div style="left:827px;top:341px;width:13px;height:13px;background:#f6f6f6;border:1px solid #c9c9c9;border-radius:3px;box-sizing:border-box;"></div>
<div class="t" style="top:342px;font-size:11px;line-height:13px;color:#8c8c8c;white-space:nowrap;transform:scaleX(0.979);transform-origin:left center;left:845px;">Interleaved</div>
<div style="left:827px;top:371px;width:13px;height:13px;background:#f6f6f6;border:1px solid #626262;border-radius:3px;box-sizing:border-box;"></div>
<div class="t" style="top:372px;font-size:11px;line-height:13px;color:#000;white-space:nowrap;left:845px;">Show FFT</div>
<div style="left:827px;top:399px;width:91px;height:22px;background:#fdfdfd;border:1px solid #d2d2d2;border-bottom-color:#bcbcbc;border-radius:3px;box-sizing:border-box;"></div>
<div class="t" style="top:404px;font-size:11px;line-height:13px;color:#000;white-space:nowrap;transform:scaleX(1.16);transform-origin:left center;left:831px;">Off</div>
<svg style="left:905px;top:408px" width="10" height="6"><path d="M0.9 1.3 L4.6 4.8 L8.3 1.3" fill="none" stroke="#3a3a3a" stroke-width="1.05"/></svg>
<div class="t" style="top:405px;font-size:11px;line-height:13px;color:#000;white-space:nowrap;transform:scaleX(1.053);transform-origin:left center;left:937px;">Low pass</div>
<div style="left:827px;top:429px;width:111px;height:22px;background:#fdfdfd;border:1px solid #d2d2d2;border-bottom-color:#bcbcbc;border-radius:3px;box-sizing:border-box;"></div>
<div class="t" style="top:434px;font-size:11px;line-height:13px;color:#000;white-space:nowrap;transform:scaleX(0.945);transform-origin:left center;left:831px;">Gnd</div>
<svg style="left:925px;top:438px" width="10" height="6"><path d="M0.9 1.3 L4.6 4.8 L8.3 1.3" fill="none" stroke="#3a3a3a" stroke-width="1.05"/></svg>
<div class="t" style="top:435px;font-size:11px;line-height:13px;color:#000;white-space:nowrap;transform:scaleX(1.02);transform-origin:left center;left:947px;">Aux out</div>
<div style="left:1007px;top:59px;width:210px;height:410px;border:1px solid #dcdcdc;box-sizing:border-box;border-right:none;"></div>
<div style="left:1028px;top:70px;width:69px;height:21px;background:#cce4f7;border:1px solid #005a9e;border-radius:4px;box-sizing:border-box;"></div>
<div class="t" style="top:75px;font-size:11px;line-height:13px;color:#000;white-space:nowrap;transform:scaleX(0.933);transform-origin:center center;left:912.5px;width:300px;text-align:center;">Run</div>
<div style="left:1028px;top:100px;width:69px;height:21px;background:#fdfdfd;border:1px solid #d2d2d2;border-bottom-color:#b9b9b9;border-radius:4px;box-sizing:border-box;"></div>
<div class="t" style="top:105px;font-size:11px;line-height:13px;color:#000;white-space:nowrap;transform:scaleX(0.95);transform-origin:center center;left:912.0px;width:300px;text-align:center;">Single</div>
<div style="left:1028px;top:130px;width:69px;height:21px;background:#cce4f7;border:1px solid #005a9e;border-radius:4px;box-sizing:border-box;"></div>
<div class="t" style="top:135px;font-size:11px;line-height:13px;color:#000;white-space:nowrap;left:911.5px;width:300px;text-align:center;">Auto</div>
<div class="t" style="top:73px;font-size:11px;line-height:13px;color:#000;white-space:nowrap;transform:scaleX(0.986);transform-origin:left center;left:1144px;">Trig threshold</div>
<div style="left:1179px;top:99px;width:4px;height:251px;background:#e7eaea;border:1px solid #d6d6d6;box-sizing:border-box;"></div>
<div style="left:1177px;top:219px;width:9px;height:10px;background:#0078d7;"></div>
<div style="left:1017px;top:176px;width:121px;height:183px;border:1px solid #dcdcdc;box-sizing:border-box;"></div>
<div style="left:1023.5px;top:174px;width:77px;height:5px;background:#f0f0f0;"></div>
<div class="t" style="top:170px;font-size:11px;line-height:13px;color:#000;white-space:nowrap;left:1025.5px;">Trigger options</div>
<div style="left:1027px;top:193px;width:81px;height:21px;background:#fdfdfd;border:1px solid #d2d2d2;border-bottom-color:#bcbcbc;border-radius:3px;box-sizing:border-box;"></div>
<div class="t" style="top:198px;font-size:11px;line-height:13px;color:#000;white-space:nowrap;transform:scaleX(0.95);transform-origin:left center;left:1031px;">Rising</div>
<svg style="left:1095px;top:202px" width="10" height="6"><path d="M0.9 1.3 L4.6 4.8 L8.3 1.3" fill="none" stroke="#3a3a3a" stroke-width="1.05"/></svg>
<div style="left:1027px;top:219px;width:81px;height:21px;background:#fdfdfd;border:1px solid #d2d2d2;border-bottom-color:#bcbcbc;border-radius:3px;box-sizing:border-box;"></div>
<div class="t" style="top:224px;font-size:11px;line-height:13px;color:#000;white-space:nowrap;transform:scaleX(0.963);transform-origin:left center;left:1031px;">Chan 0</div>
<svg style="left:1095px;top:228px" width="10" height="6"><path d="M0.9 1.3 L4.6 4.8 L8.3 1.3" fill="none" stroke="#3a3a3a" stroke-width="1.05"/></svg>
<div style="left:1027px;top:255px;width:13px;height:13px;background:#f6f6f6;border:1px solid #626262;border-radius:3px;box-sizing:border-box;"></div>
<div class="t" style="top:256px;font-size:11px;line-height:13px;color:#000;white-space:nowrap;left:1045px;">Other boards</div>
<div style="left:1027px;top:275px;width:13px;height:13px;background:#f6f6f6;border:1px solid #626262;border-radius:3px;box-sizing:border-box;"></div>
<div class="t" style="top:276px;font-size:11px;line-height:13px;color:#000;white-space:nowrap;transform:scaleX(0.977);transform-origin:left center;left:1045px;">External</div>
<div style="left:1028px;top:305px;width:49px;height:20px;background:#fff;"></div>
<div style="left:1028px;top:325px;width:49px;height:1px;background:#868686;"></div>
<div style="left:1062px;top:306px;width:14px;height:10px;border:1px solid #c6c6c6;background:#f0f0f0;box-sizing:border-box;"></div>
<div style="left:1062px;top:315px;width:14px;height:9px;border:1px solid #c6c6c6;background:#f0f0f0;box-sizing:border-box;"></div>
<svg style="left:1062px;top:305px" width="14" height="21"><path d="M3.8 7.6 L6.5 4.3 L9.2 7.6 Z" fill="#000"/><path d="M3.8 12.7 L6.5 16.0 L9.2 12.7 Z" fill="#000"/></svg>
<div class="t" style="top:309px;font-size:11px;line-height:13px;color:#000;white-space:nowrap;left:1030px;">0</div>
<div class="t" style="top:306px;font-size:11px;line-height:13px;color:#000;white-space:nowrap;left:1087px;">ToT</div>
<div style="left:1028px;top:330px;width:49px;height:18px;background:#fff;"></div>
<div style="left:1028px;top:348px;width:49px;height:1px;background:#868686;"></div>
<div style="left:1062px;top:331px;width:14px;height:9px;border:1px solid #c6c6c6;background:#f0f0f0;box-sizing:border-box;"></div>
<div style="left:1062px;top:339px;width:14px;height:8px;border:1px solid #c6c6c6;background:#f0f0f0;box-sizing:border-box;"></div>
<svg style="left:1062px;top:330px" width="14" height="19"><path d="M3.8 7.1 L6.5 3.8 L9.2 7.1 Z" fill="#000"/><path d="M3.8 11.2 L6.5 14.5 L9.2 11.2 Z" fill="#000"/></svg>
<div class="t" style="top:333px;font-size:11px;line-height:13px;color:#000;white-space:nowrap;left:1030px;">2</div>
<div class="t" style="top:331px;font-size:11px;line-height:13px;color:#000;white-space:nowrap;transform:scaleX(0.934);transform-origin:left center;left:1087px;">Delta</div>
<div class="t" style="top:371px;font-size:11px;line-height:13px;color:#000;white-space:nowrap;transform:scaleX(0.951);transform-origin:center center;left:962px;width:300px;text-align:center;">Trig time</div>
<div style="left:1017px;top:391px;width:191px;height:4px;background:#e7eaea;border:1px solid #d6d6d6;box-sizing:border-box;"></div>
<div style="left:1108px;top:389px;width:10px;height:9px;background:#0078d7;"></div>
<div class="t" style="top:421px;font-size:11px;line-height:13px;color:#000;white-space:nowrap;transform:scaleX(0.965);transform-origin:center center;left:922px;width:300px;text-align:center;">Time scale</div>
<div style="left:1028px;top:440px;width:89px;height:18px;background:#fff;"></div>
<div style="left:1028px;top:458px;width:89px;height:1px;background:#868686;"></div>
<div class="t" style="top:443px;font-size:11px;line-height:13px;color:#000;white-space:nowrap;left:922px;width:300px;text-align:center;">125.0 ns</div>
<div style="left:1138px;top:420px;width:59px;height:19px;background:#fdfdfd;border:1px solid #d2d2d2;border-bottom-color:#b9b9b9;border-radius:4px;box-sizing:border-box;"></div>
<div class="t" style="top:424px;font-size:11px;line-height:13px;color:#000;white-space:nowrap;left:1017.5px;width:300px;text-align:center;">Faster</div>
<div style="left:1138px;top:440px;width:59px;height:19px;background:#fdfdfd;border:1px solid #d2d2d2;border-bottom-color:#b9b9b9;border-radius:4px;box-sizing:border-box;"></div>
<div class="t" style="top:444px;font-size:11px;line-height:13px;color:#000;white-space:nowrap;transform:scaleX(1.045);transform-origin:center center;left:1017.5px;width:300px;text-align:center;">Slower</div>
<div style="left:817px;top:486px;width:121px;height:163px;border:1px solid #dcdcdc;box-sizing:border-box;"></div>
<div style="left:824px;top:484px;width:95px;height:5px;background:#f0f0f0;"></div>
<div class="t" style="top:480px;font-size:11px;line-height:13px;color:#000;white-space:nowrap;left:826px;">Clocks (advanced)</div>
<div class="t" style="top:513px;font-size:11px;line-height:13px;color:#000;white-space:nowrap;transform:scaleX(0.935);transform-origin:left center;left:827px;">PLL:</div>
<div style="left:857px;top:510px;width:50px;height:20px;background:#f3f3f3;border:1px solid #e8e8e8;box-sizing:border-box;"></div>
<div style="left:892px;top:511px;width:14px;height:10px;border:1px solid #dcdcdc;background:#f0f0f0;box-sizing:border-box;"></div>
<div style="left:892px;top:520px;width:14px;height:9px;border:1px solid #dcdcdc;background:#f0f0f0;box-sizing:border-box;"></div>
<svg style="left:892px;top:510px" width="14" height="21"><path d="M3.8 7.6 L6.5 4.3 L9.2 7.6 Z" fill="#9a9a9a"/><path d="M3.8 12.7 L6.5 16.0 L9.2 12.7 Z" fill="#9a9a9a"/></svg>
<div class="t" style="top:514px;font-size:11px;line-height:13px;color:#8a8a8a;white-space:nowrap;left:860px;">0</div>
<div class="t" style="top:541px;font-size:11px;line-height:13px;color:#000;white-space:nowrap;transform:scaleX(0.96);transform-origin:left center;left:827.5px;">c0</div>
<div style="left:828px;top:561px;width:18px;height:17px;background:#f8f8f8;border-radius:4px;"></div>
<div style="left:828px;top:581px;width:18px;height:17px;background:#f8f8f8;border-radius:4px;"></div>
<svg style="left:828px;top:561px" width="18" height="37"><path d="M3.3 11 L9 4.9 L14.7 11 Z" fill="#9d9d9d"/><path d="M3.3 25.6 L9 31.7 L14.7 25.6 Z" fill="#9d9d9d"/></svg>
<div class="t" style="top:541px;font-size:11px;line-height:13px;color:#000;white-space:nowrap;transform:scaleX(0.96);transform-origin:left center;left:847.5px;">c1</div>
<div style="left:848px;top:561px;width:18px;height:17px;background:#f8f8f8;border-radius:4px;"></div>
<div style="left:848px;top:581px;width:18px;height:17px;background:#f8f8f8;border-radius:4px;"></div>
<svg style="left:848px;top:561px" width="18" height="37"><path d="M3.3 11 L9 4.9 L14.7 11 Z" fill="#9d9d9d"/><path d="M3.3 25.6 L9 31.7 L14.7 25.6 Z" fill="#9d9d9d"/></svg>
<div class="t" style="top:541px;font-size:11px;line-height:13px;color:#000;white-space:nowrap;transform:scaleX(0.96);transform-origin:left center;left:867.5px;">c2</div>
<div style="left:868px;top:561px;width:18px;height:17px;background:#f8f8f8;border-radius:4px;"></div>
<div style="left:868px;top:581px;width:18px;height:17px;background:#f8f8f8;border-radius:4px;"></div>
<svg style="left:868px;top:561px" width="18" height="37"><path d="M3.3 11 L9 4.9 L14.7 11 Z" fill="#9d9d9d"/><path d="M3.3 25.6 L9 31.7 L14.7 25.6 Z" fill="#9d9d9d"/></svg>
<div class="t" style="top:541px;font-size:11px;line-height:13px;color:#000;white-space:nowrap;transform:scaleX(0.96);transform-origin:left center;left:887.5px;">c3</div>
<div style="left:888px;top:561px;width:18px;height:17px;background:#f8f8f8;border-radius:4px;"></div>
<div style="left:888px;top:581px;width:18px;height:17px;background:#f8f8f8;border-radius:4px;"></div>
<svg style="left:888px;top:561px" width="18" height="37"><path d="M3.3 11 L9 4.9 L14.7 11 Z" fill="#9d9d9d"/><path d="M3.3 25.6 L9 31.7 L14.7 25.6 Z" fill="#9d9d9d"/></svg>
<div class="t" style="top:541px;font-size:11px;line-height:13px;color:#000;white-space:nowrap;transform:scaleX(0.96);transform-origin:left center;left:907.5px;">c4</div>
<div style="left:908px;top:561px;width:18px;height:17px;background:#f8f8f8;border-radius:4px;"></div>
<div style="left:908px;top:581px;width:18px;height:17px;background:#f8f8f8;border-radius:4px;"></div>
<svg style="left:908px;top:561px" width="18" height="37"><path d="M3.3 11 L9 4.9 L14.7 11 Z" fill="#9d9d9d"/><path d="M3.3 25.6 L9 31.7 L14.7 25.6 Z" fill="#9d9d9d"/></svg>
<div style="left:838px;top:610px;width:79px;height:21px;background:#fdfdfd;border:1px solid #d2d2d2;border-bottom-color:#b9b9b9;border-radius:4px;box-sizing:border-box;"></div>
<div class="t" style="top:615px;font-size:11px;line-height:13px;color:#000;white-space:nowrap;transform:scaleX(0.948);transform-origin:center center;left:727.5px;width:300px;text-align:center;">Reset PLL</div>
<div style="left:947px;top:486px;width:131px;height:163px;border:1px solid #dcdcdc;box-sizing:border-box;"></div>
<div style="left:954px;top:484px;width:82px;height:5px;background:#f0f0f0;"></div>
<div class="t" style="top:480px;font-size:11px;line-height:13px;color:#000;white-space:nowrap;transform:scaleX(0.973);transform-origin:left center;left:956px;">Readout options</div>
<div style="left:958px;top:500px;width:49px;height:20px;background:#fff;"></div>
<div style="left:958px;top:520px;width:49px;height:1px;background:#868686;"></div>
<div style="left:992px;top:501px;width:14px;height:10px;border:1px solid #c6c6c6;background:#f0f0f0;box-sizing:border-box;"></div>
<div style="left:992px;top:510px;width:14px;height:9px;border:1px solid #c6c6c6;background:#f0f0f0;box-sizing:border-box;"></div>
<svg style="left:992px;top:500px" width="14" height="21"><path d="M3.8 7.6 L6.5 4.3 L9.2 7.6 Z" fill="#000"/><path d="M3.8 12.7 L6.5 16.0 L9.2 12.7 Z" fill="#000"/></svg>
<div class="t" style="top:504px;font-size:11px;line-height:13px;color:#000;white-space:nowrap;left:960px;">100</div>
<div class="t" style="top:503px;font-size:11px;line-height:13px;color:#000;white-space:nowrap;transform:scaleX(0.943);transform-origin:left center;left:1017px;">Depth</div>
<div style="left:958px;top:528px;width:49px;height:20px;background:#fff;"></div>
<div style="left:958px;top:548px;width:49px;height:1px;background:#868686;"></div>
<div style="left:992px;top:529px;width:14px;height:10px;border:1px solid #c6c6c6;background:#f0f0f0;box-sizing:border-box;"></div>
<div style="left:992px;top:538px;width:14px;height:9px;border:1px solid #c6c6c6;background:#f0f0f0;box-sizing:border-box;"></div>
<svg style="left:992px;top:528px" width="14" height="21"><path d="M3.8 7.6 L6.5 4.3 L9.2 7.6 Z" fill="#000"/><path d="M3.8 12.7 L6.5 16.0 L9.2 12.7 Z" fill="#000"/></svg>
<div class="t" style="top:532px;font-size:11px;line-height:13px;color:#000;white-space:nowrap;left:960px;">4</div>
<div class="t" style="top:533px;font-size:11px;line-height:13px;color:#000;white-space:nowrap;transform:scaleX(0.947);transform-origin:left center;left:1017px;">Upsample</div>
<div style="left:958px;top:594px;width:49px;height:20px;background:#fff;"></div>
<div style="left:958px;top:614px;width:49px;height:1px;background:#868686;"></div>
<div style="left:992px;top:595px;width:14px;height:10px;border:1px solid #c6c6c6;background:#f0f0f0;box-sizing:border-box;"></div>
<div style="left:992px;top:604px;width:14px;height:9px;border:1px solid #c6c6c6;background:#f0f0f0;box-sizing:border-box;"></div>
<svg style="left:992px;top:594px" width="14" height="21"><path d="M3.8 7.6 L6.5 4.3 L9.2 7.6 Z" fill="#000"/><path d="M3.8 12.7 L6.5 16.0 L9.2 12.7 Z" fill="#000"/></svg>
<div class="t" style="top:598px;font-size:11px;line-height:13px;color:#000;white-space:nowrap;left:960px;">100</div>
<div class="t" style="top:597px;font-size:11px;line-height:13px;color:#000;white-space:nowrap;transform:scaleX(0.957);transform-origin:left center;left:1017px;">Delay</div>
<div style="left:958px;top:618px;width:49px;height:20px;background:#fff;"></div>
<div style="left:958px;top:638px;width:49px;height:1px;background:#868686;"></div>
<div style="left:992px;top:619px;width:14px;height:10px;border:1px solid #c6c6c6;background:#f0f0f0;box-sizing:border-box;"></div>
<div style="left:992px;top:628px;width:14px;height:9px;border:1px solid #c6c6c6;background:#f0f0f0;box-sizing:border-box;"></div>
<svg style="left:992px;top:618px" width="14" height="21"><path d="M3.8 7.6 L6.5 4.3 L9.2 7.6 Z" fill="#000"/><path d="M3.8 12.7 L6.5 16.0 L9.2 12.7 Z" fill="#000"/></svg>
<div class="t" style="top:622px;font-size:11px;line-height:13px;color:#000;white-space:nowrap;left:960px;">0</div>
<div class="t" style="top:621px;font-size:11px;line-height:13px;color:#000;white-space:nowrap;transform:scaleX(0.962);transform-origin:left center;left:1017px;">Fine delay</div>
<div style="left:1087px;top:486px;width:130px;height:163px;border:1px solid #dcdcdc;box-sizing:border-box;border-right:none;"></div>
<div style="left:1094px;top:484px;width:69px;height:5px;background:#f0f0f0;"></div>
<div class="t" style="top:480px;font-size:11px;line-height:13px;color:#000;white-space:nowrap;transform:scaleX(1.027);transform-origin:left center;left:1096px;">View options</div>
<div style="left:1098px;top:500px;width:49px;height:20px;background:#fff;"></div>
<div style="left:1098px;top:520px;width:49px;height:1px;background:#868686;"></div>
<div style="left:1132px;top:501px;width:14px;height:10px;border:1px solid #c6c6c6;background:#f0f0f0;box-sizing:border-box;"></div>
<div style="left:1132px;top:510px;width:14px;height:9px;border:1px solid #c6c6c6;background:#f0f0f0;box-sizing:border-box;"></div>
<svg style="left:1132px;top:500px" width="14" height="21"><path d="M3.8 7.6 L6.5 4.3 L9.2 7.6 Z" fill="#000"/><path d="M3.8 12.7 L6.5 16.0 L9.2 12.7 Z" fill="#000"/></svg>
<div class="t" style="top:504px;font-size:11px;line-height:13px;color:#000;white-space:nowrap;left:1100px;">0</div>
<div class="t" style="top:505px;font-size:11px;line-height:13px;color:#000;white-space:nowrap;left:1157px;">Persist</div>
<div style="left:1097px;top:531px;width:13px;height:13px;background:#005fb8;border-radius:3px;"></div>
<svg style="left:1097px;top:531px" width="13" height="13"><path d="M3.1 6.7 L5.4 8.9 L9.8 4.3" fill="none" stroke="#fff" stroke-width="1.1" stroke-linecap="round" stroke-linejoin="round"/></svg>
<div class="t" style="top:532px;font-size:11px;line-height:13px;color:#000;white-space:nowrap;transform:scaleX(0.976);transform-origin:left center;left:1115px;">Persist lines</div>
<div style="left:1097px;top:551px;width:13px;height:13px;background:#f6f6f6;border:1px solid #626262;border-radius:3px;box-sizing:border-box;"></div>
<div class="t" style="top:552px;font-size:11px;line-height:13px;color:#000;white-space:nowrap;transform:scaleX(0.99);transform-origin:left center;left:1115px;">Persist average</div>
<div style="left:1098px;top:590px;width:49px;height:20px;background:#fff;"></div>
<div style="left:1098px;top:610px;width:49px;height:1px;background:#868686;"></div>
<div style="left:1132px;top:591px;width:14px;height:10px;border:1px solid #c6c6c6;background:#f0f0f0;box-sizing:border-box;"></div>
<div style="left:1132px;top:600px;width:14px;height:9px;border:1px solid #c6c6c6;background:#f0f0f0;box-sizing:border-box;"></div>
<svg style="left:1132px;top:590px" width="14" height="21"><path d="M3.8 7.6 L6.5 4.3 L9.2 7.6 Z" fill="#000"/><path d="M3.8 12.7 L6.5 16.0 L9.2 12.7 Z" fill="#000"/></svg>
<div class="t" style="top:594px;font-size:11px;line-height:13px;color:#000;white-space:nowrap;left:1100px;">20%</div>
<div class="t" style="top:593px;font-size:11px;line-height:13px;color:#000;white-space:nowrap;left:1157px;">Fit fraction</div>
<div style="left:1098px;top:618px;width:49px;height:20px;background:#fff;"></div>
<div style="left:1098px;top:638px;width:49px;height:1px;background:#868686;"></div>
<div style="left:1132px;top:619px;width:14px;height:10px;border:1px solid #c6c6c6;background:#f0f0f0;box-sizing:border-box;"></div>
<div style="left:1132px;top:628px;width:14px;height:9px;border:1px solid #c6c6c6;background:#f0f0f0;box-sizing:border-box;"></div>
<svg style="left:1132px;top:618px" width="14" height="21"><path d="M3.8 7.6 L6.5 4.3 L9.2 7.6 Z" fill="#000"/><path d="M3.8 12.7 L6.5 16.0 L9.2 12.7 Z" fill="#000"/></svg>
<div class="t" style="top:622px;font-size:11px;line-height:13px;color:#000;white-space:nowrap;left:1100px;">1</div>
<div class="t" style="top:623px;font-size:11px;line-height:13px;color:#000;white-space:nowrap;left:1157px;">Line width</div>
<div style="left:817px;top:659px;width:400px;height:240px;background:#fff;border:1px solid #828790;box-sizing:border-box;"></div>
<div style="left:818px;top:802px;width:14px;height:96px;background:#f0f0f0;"></div>
<div style="left:831px;top:711px;width:376px;height:1px;background:#d8d8d8;"></div>
<div class="t" style="top:690px;font-size:11px;line-height:13px;color:#000;white-space:nowrap;left:822px;">1</div>
<div class="t" style="top:690px;font-size:11px;line-height:13px;color:#000;white-space:nowrap;transform:scaleX(0.953);transform-origin:left center;left:835px;">ADC temp (°C)</div>
<div class="t" style="top:690px;font-size:11px;line-height:13px;color:#000;white-space:nowrap;left:970px;">41.98</div>
<div class="t" style="top:690px;font-size:11px;line-height:13px;color:#000;white-space:nowrap;left:1050px;">41.98</div>
<div class="t" style="top:690px;font-size:11px;line-height:13px;color:#000;white-space:nowrap;left:1130px;">0.0</div>
<div style="left:832px;top:712px;width:374px;height:29px;background:#f5f5f5;"></div>
<div style="left:831px;top:741px;width:376px;height:1px;background:#d8d8d8;"></div>
<div class="t" style="top:720px;font-size:11px;line-height:13px;color:#000;white-space:nowrap;left:822px;">2</div>
<div class="t" style="top:720px;font-size:11px;line-height:13px;color:#000;white-space:nowrap;transform:scaleX(0.966);transform-origin:left center;left:835px;">Board temp (°C)</div>
<div class="t" style="top:720px;font-size:11px;line-height:13px;color:#000;white-space:nowrap;left:970px;">33.23</div>
<div class="t" style="top:720px;font-size:11px;line-height:13px;color:#000;white-space:nowrap;left:1050px;">33.23</div>
<div class="t" style="top:720px;font-size:11px;line-height:13px;color:#000;white-space:nowrap;left:1130px;">0.0</div>
<div style="left:831px;top:771px;width:376px;height:1px;background:#d8d8d8;"></div>
<div class="t" style="top:750px;font-size:11px;line-height:13px;color:#000;white-space:nowrap;left:822px;">3</div>
<div class="t" style="top:750px;font-size:11px;line-height:13px;color:#000;white-space:nowrap;transform:scaleX(0.98);transform-origin:left center;left:835px;">Mean (mV)</div>
<div class="t" style="top:750px;font-size:11px;line-height:13px;color:#000;white-space:nowrap;left:970px;">-3.23</div>
<div class="t" style="top:750px;font-size:11px;line-height:13px;color:#000;white-space:nowrap;left:1050px;">-3.3</div>
<div class="t" style="top:750px;font-size:11px;line-height:13px;color:#000;white-space:nowrap;left:1130px;">0.22</div>
<div style="left:832px;top:772px;width:374px;height:29px;background:#f5f5f5;"></div>
<div style="left:831px;top:801px;width:376px;height:1px;background:#d8d8d8;"></div>
<div class="t" style="top:780px;font-size:11px;line-height:13px;color:#000;white-space:nowrap;left:822px;">4</div>
<div class="t" style="top:780px;font-size:11px;line-height:13px;color:#000;white-space:nowrap;transform:scaleX(0.96);transform-origin:left center;left:835px;">RMS (mV)</div>
<div class="t" style="top:780px;font-size:11px;line-height:13px;color:#000;white-space:nowrap;left:970px;">298.32</div>
<div class="t" style="top:780px;font-size:11px;line-height:13px;color:#000;white-space:nowrap;left:1050px;">298.33</div>
<div class="t" style="top:780px;font-size:11px;line-height:13px;color:#000;white-space:nowrap;left:1130px;">0.17</div>
<div style="left:831px;top:682px;width:1px;height:120px;background:#d8d8d8;"></div>
<div style="left:831px;top:660px;width:1px;height:22px;background:#ebebeb;"></div>
<div style="left:966px;top:682px;width:1px;height:120px;background:#d8d8d8;"></div>
<div style="left:966px;top:660px;width:1px;height:22px;background:#ebebeb;"></div>
<div style="left:1046px;top:682px;width:1px;height:120px;background:#d8d8d8;"></div>
<div style="left:1046px;top:660px;width:1px;height:22px;background:#ebebeb;"></div>
<div style="left:1126px;top:682px;width:1px;height:120px;background:#d8d8d8;"></div>
<div style="left:1126px;top:660px;width:1px;height:22px;background:#ebebeb;"></div>
<div style="left:1206px;top:682px;width:1px;height:120px;background:#d8d8d8;"></div>
<div style="left:1206px;top:660px;width:1px;height:22px;background:#ebebeb;"></div>
<div class="t" style="top:665px;font-size:11px;line-height:13px;color:#000;white-space:nowrap;transform:scaleX(0.974);transform-origin:center center;left:749.5px;width:300px;text-align:center;">Measurement</div>
<div class="t" style="top:665px;font-size:11px;line-height:13px;color:#000;white-space:nowrap;left:857.0px;width:300px;text-align:center;">Value</div>
<div class="t" style="top:665px;font-size:11px;line-height:13px;color:#000;white-space:nowrap;left:937.0px;width:300px;text-align:center;">Avg</div>
<div class="t" style="top:665px;font-size:11px;line-height:13px;color:#000;white-space:nowrap;left:1017.0px;width:300px;text-align:center;">RMS</div>
</div>
</body></html>
